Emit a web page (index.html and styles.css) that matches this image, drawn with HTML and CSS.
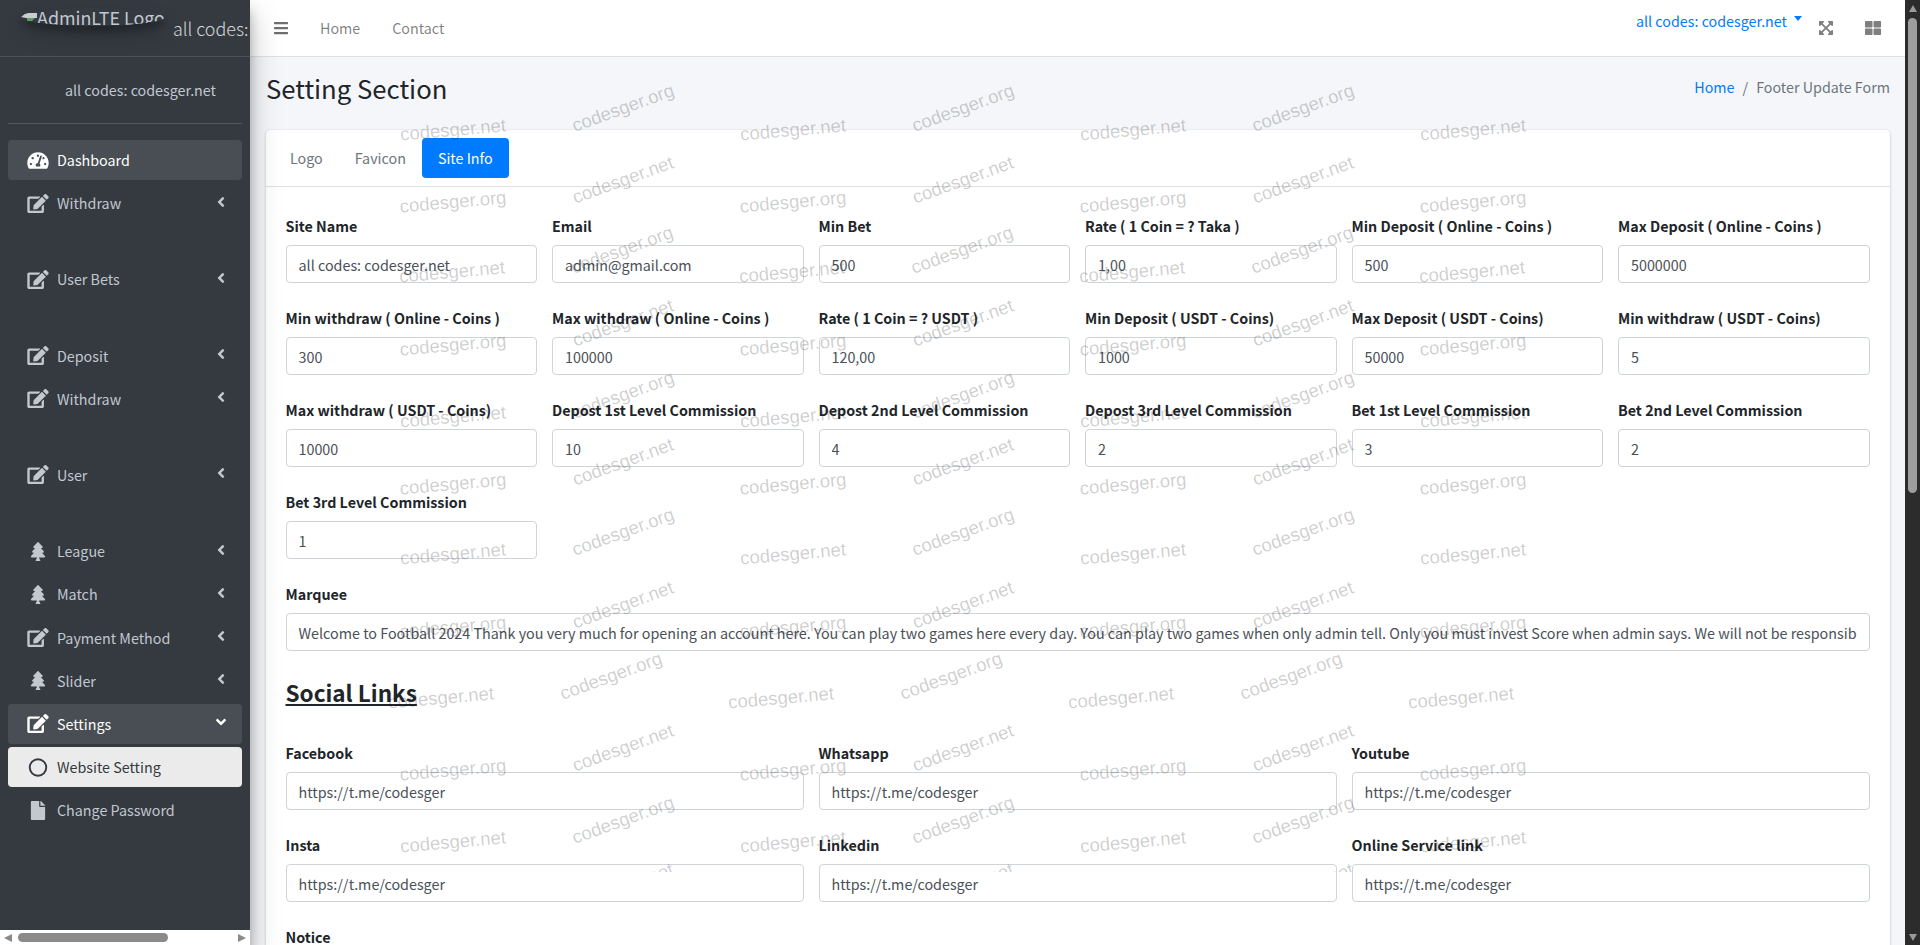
FILE: index.html
```html
<!DOCTYPE html>
<html lang="en">
<head>
<meta charset="utf-8">
<title>Setting Section</title>
<link rel="stylesheet" href="styles.css">
</head>
<body>
<svg class="defs" aria-hidden="true">
  <symbol id="i-edit" viewBox="0 0 576 512"><path d="M402.6 83.2l90.2 90.2c3.8 3.8 3.8 10 0 13.8L274.4 405.6l-92.8 10.3c-12.4 1.4-22.9-9.1-21.5-21.5l10.3-92.8L388.8 83.2c3.8-3.8 10-3.8 13.8 0zm162-22.9l-48.8-48.8c-15.2-15.2-39.9-15.2-55.2 0l-35.4 35.4c-3.8 3.8-3.8 10 0 13.8l90.2 90.2c3.8 3.8 10 3.8 13.8 0l35.4-35.4c15.2-15.3 15.2-40 0-55.2zM384 346.2V448H64V128h229.8c3.2 0 6.2-1.3 8.5-3.5l40-40c7.6-7.6 2.2-20.5-8.5-20.5H48C21.5 64 0 85.5 0 112v352c0 26.5 21.5 48 48 48h352c26.5 0 48-21.5 48-48V306.2c0-10.7-12.9-16-20.5-8.5l-40 40c-2.2 2.3-3.5 5.3-3.5 8.5z"/></symbol>
  <symbol id="i-gauge" viewBox="0 0 576 512"><path d="M288 32C128.94 32 0 160.94 0 320c0 52.8 14.25 102.26 39.06 144.8 5.61 9.62 16.3 15.2 27.44 15.2h443c11.14 0 21.83-5.58 27.44-15.2C561.75 422.26 576 372.8 576 320c0-159.06-128.94-288-288-288zm0 64c14.71 0 26.58 10.13 30.32 23.65-1.11 2.26-2.64 4.23-3.45 6.67l-9.22 27.67c-5.13 3.49-10.97 6.01-17.64 6.01-17.67 0-32-14.33-32-32S270.33 96 288 96zM96 384c-17.67 0-32-14.33-32-32s14.33-32 32-32 32 14.33 32 32-14.33 32-32 32zm48-160c-17.67 0-32-14.33-32-32s14.33-32 32-32 32 14.33 32 32-14.33 32-32 32zm246.77-72.41l-61.33 184C343.13 347.33 352 364.54 352 384c0 11.72-3.38 22.55-8.88 32H232.88c-5.5-9.45-8.88-20.28-8.88-32 0-33.94 26.5-61.43 59.9-63.59l61.34-184.01c4.17-12.56 17.73-19.45 30.36-15.17 12.57 4.19 19.35 17.79 15.17 30.36zm14.66 57.2l15.52-46.55c3.47-1.29 7.13-2.23 11.05-2.23 17.67 0 32 14.33 32 32s-14.33 32-32 32c-11.38-.01-20.89-6.28-26.57-15.22zM480 384c-17.67 0-32-14.33-32-32s14.33-32 32-32 32 14.33 32 32-14.33 32-32 32z"/></symbol>
  <symbol id="i-tree" viewBox="0 0 384 512"><path d="M378.31 378.49L298.42 288h30.63c9.01 0 16.98-5 20.78-13.06 3.8-8.04 2.55-17.26-3.28-24.05L268.42 160h28.89c9.1 0 17.3-5.35 20.86-13.61 3.52-8.13 1.86-17.59-4.24-24.08L203.66 4.83c-6.03-6.45-17.28-6.45-23.32 0L70.06 122.31c-6.1 6.49-7.75 15.95-4.24 24.08C69.38 154.65 77.59 160 86.69 160h28.89l-78.14 90.91c-5.81 6.78-7.06 15.99-3.27 24.04C37.97 283 45.93 288 54.95 288h30.63L5.69 378.49c-6 6.79-7.36 16.09-3.56 24.26 3.75 8.05 12 13.25 21 13.25H160v24.45l-30.29 48.4c-5.32 10.64 2.42 23.16 14.31 23.16h95.96c11.89 0 19.63-12.52 14.31-23.16L224 440.45V416h136.87c9 0 17.25-5.2 21-13.25 3.8-8.17 2.44-17.47-3.56-24.26z"/></symbol>
  <symbol id="i-file" viewBox="0 0 384 512"><path d="M224 136V0H24C10.7 0 0 10.7 0 24v464c0 13.3 10.7 24 24 24h336c13.3 0 24-10.7 24-24V160H248c-13.2 0-24-10.8-24-24zm160-14.1v6.1H256V0h6.1c6.4 0 12.5 2.5 17 7l97.9 98c4.5 4.5 7 10.6 7 16.9z"/></symbol>
  <symbol id="i-left" viewBox="0 0 256 512"><path d="M31.7 239l136-136c9.4-9.4 24.6-9.4 33.9 0l22.6 22.6c9.4 9.4 9.4 24.6 0 33.9L127.9 256l96.4 96.4c9.4 9.4 9.4 24.6 0 33.9L201.7 409c-9.4 9.4-24.6 9.4-33.9 0l-136-136c-9.5-9.4-9.5-24.6-.1-34z"/></symbol>
  <symbol id="i-bars" viewBox="0 0 448 512"><path d="M16 132h416c8.837 0 16-7.163 16-16V76c0-8.837-7.163-16-16-16H16C7.163 60 0 67.163 0 76v40c0 8.837 7.163 16 16 16zm0 160h416c8.837 0 16-7.163 16-16v-40c0-8.837-7.163-16-16-16H16c-8.837 0-16 7.163-16 16v40c0 8.837 7.163 16 16 16zm0 160h416c8.837 0 16-7.163 16-16v-40c0-8.837-7.163-16-16-16H16c-8.837 0-16 7.163-16 16v40c0 8.837 7.163 16 16 16z"/></symbol>
  <symbol id="i-expand" viewBox="0 0 448 512"><path d="M448 344v112a23.94 23.94 0 0 1-24 24H312c-21.39 0-32.09-25.9-17-41l36.2-36.2L224 295.6 116.77 402.9 153 439c15.09 15.1 4.39 41-17 41H24a23.94 23.94 0 0 1-24-24V344c0-21.4 25.89-32.1 41-17l36.19 36.2L184.46 256 77.18 148.7 41 185c-15.1 15.1-41 4.4-41-17V56a23.94 23.94 0 0 1 24-24h112c21.39 0 32.09 25.9 17 41l-36.2 36.2L224 216.4l107.23-107.3L295 73c-15.09-15.1-4.39-41 17-41h112a23.94 23.94 0 0 1 24 24v112c0 21.4-25.89 32.1-41 17l-36.19-36.2L263.54 256l107.28 107.3L407 327.1c15.1-15.2 41-4.5 41 16.9z"/></symbol>
  <symbol id="i-grid" viewBox="0 0 512 512"><path d="M296 32h192c13.255 0 24 10.745 24 24v160c0 13.255-10.745 24-24 24H296c-13.255 0-24-10.745-24-24V56c0-13.255 10.745-24 24-24zm-80 0H24C10.745 32 0 42.745 0 56v160c0 13.255 10.745 24 24 24h192c13.255 0 24-10.745 24-24V56c0-13.255-10.745-24-24-24zM0 296v160c0 13.255 10.745 24 24 24h192c13.255 0 24-10.745 24-24V296c0-13.255-10.745-24-24-24H24c-13.255 0-24 10.745-24 24zm296 184h192c13.255 0 24-10.745 24-24V296c0-13.255-10.745-24-24-24H296c-13.255 0-24 10.745-24 24v160c0 13.255 10.745 24 24 24z"/></symbol>
</svg>

<div class="app">
  <aside class="side-col">
    <div class="sidebar">
      <div class="brand">
        <div class="logo">
          <svg class="logo-broken" viewBox="0 0 16 16"><path class="lb-a" d="M0 8 5 4h11v5H5z"/><path class="lb-b" d="M6 9h8l-3 3H6z"/></svg>
          <span class="logo-alt">AdminLTE Logo</span>
        </div>
        <span class="brand-text">all codes: codesger.net</span>
      </div>
      <div class="user-panel">all codes: codesger.net</div>
      <ul class="nav">
        <li class="nav-item is-active"><svg class="nav-icon"><use href="#i-gauge"/></svg><span class="nav-label">Dashboard</span></li>
        <li class="nav-item"><svg class="nav-icon"><use href="#i-edit"/></svg><span class="nav-label">Withdraw</span><svg class="nav-chev"><use href="#i-left"/></svg></li>
        <li class="nav-spacer"></li>
        <li class="nav-item"><svg class="nav-icon"><use href="#i-edit"/></svg><span class="nav-label">User Bets</span><svg class="nav-chev"><use href="#i-left"/></svg></li>
        <li class="nav-spacer"></li>
        <li class="nav-item"><svg class="nav-icon"><use href="#i-edit"/></svg><span class="nav-label">Deposit</span><svg class="nav-chev"><use href="#i-left"/></svg></li>
        <li class="nav-item"><svg class="nav-icon"><use href="#i-edit"/></svg><span class="nav-label">Withdraw</span><svg class="nav-chev"><use href="#i-left"/></svg></li>
        <li class="nav-spacer"></li>
        <li class="nav-item"><svg class="nav-icon"><use href="#i-edit"/></svg><span class="nav-label">User</span><svg class="nav-chev"><use href="#i-left"/></svg></li>
        <li class="nav-spacer"></li>
        <li class="nav-item"><svg class="nav-icon"><use href="#i-tree"/></svg><span class="nav-label">League</span><svg class="nav-chev"><use href="#i-left"/></svg></li>
        <li class="nav-item"><svg class="nav-icon"><use href="#i-tree"/></svg><span class="nav-label">Match</span><svg class="nav-chev"><use href="#i-left"/></svg></li>
        <li class="nav-item"><svg class="nav-icon"><use href="#i-edit"/></svg><span class="nav-label">Payment Method</span><svg class="nav-chev"><use href="#i-left"/></svg></li>
        <li class="nav-item"><svg class="nav-icon"><use href="#i-tree"/></svg><span class="nav-label">Slider</span><svg class="nav-chev"><use href="#i-left"/></svg></li>
        <li class="nav-item is-active"><svg class="nav-icon"><use href="#i-edit"/></svg><span class="nav-label">Settings</span><svg class="nav-chev is-open"><use href="#i-left"/></svg></li>
        <li class="nav-item is-current"><svg class="nav-icon" viewBox="0 0 24 24"><circle class="ring" cx="12" cy="12" r="10.4"/></svg><span class="nav-label">Website Setting</span></li>
        <li class="nav-item"><svg class="nav-icon"><use href="#i-file"/></svg><span class="nav-label">Change Password</span></li>
      </ul>
    </div>
    <div class="hscroll">
      <span class="arr arr-left"></span>
      <div class="hscroll-track"><span class="hscroll-thumb"></span></div>
      <span class="arr arr-right"></span>
    </div>
  </aside>

  <main class="main">
    <nav class="navbar">
      <svg class="nb-bars"><use href="#i-bars"/></svg>
      <a class="nb-link">Home</a>
      <a class="nb-link">Contact</a>
      <div class="nb-right">
        <a class="nb-user">all codes: codesger.net<span class="caret"></span></a>
        <svg class="nb-expand"><use href="#i-expand"/></svg>
        <svg class="nb-grid"><use href="#i-grid"/></svg>
      </div>
    </nav>

    <div class="content">
      <header class="content-head">
        <h1 class="page-title">Setting Section</h1>
        <ol class="crumbs">
          <li class="crumb-link">Home</li>
          <li class="crumb-sep">/</li>
          <li>Footer Update Form</li>
        </ol>
      </header>

      <section class="card">
        <div class="card-head">
          <a class="pill">Logo</a>
          <a class="pill">Favicon</a>
          <a class="pill is-on">Site Info</a>
        </div>
        <div class="card-body">
          <div class="grid-6">
            <div class="field"><label class="field-label">Site Name</label><input class="field-input" value="all codes: codesger.net"></div>
            <div class="field"><label class="field-label">Email</label><input class="field-input" value="admin@gmail.com"></div>
            <div class="field"><label class="field-label">Min Bet</label><input class="field-input" value="500"></div>
            <div class="field"><label class="field-label">Rate ( 1 Coin = ? Taka )</label><input class="field-input" value="1,00"></div>
            <div class="field"><label class="field-label">Min Deposit ( Online - Coins )</label><input class="field-input" value="500"></div>
            <div class="field"><label class="field-label">Max Deposit ( Online - Coins )</label><input class="field-input" value="5000000"></div>
            <div class="field"><label class="field-label">Min withdraw ( Online - Coins )</label><input class="field-input" value="300"></div>
            <div class="field"><label class="field-label">Max withdraw ( Online - Coins )</label><input class="field-input" value="100000"></div>
            <div class="field"><label class="field-label">Rate ( 1 Coin = ? USDT )</label><input class="field-input" value="120,00"></div>
            <div class="field"><label class="field-label">Min Deposit ( USDT - Coins)</label><input class="field-input" value="1000"></div>
            <div class="field"><label class="field-label">Max Deposit ( USDT - Coins)</label><input class="field-input" value="50000"></div>
            <div class="field"><label class="field-label">Min withdraw ( USDT - Coins)</label><input class="field-input" value="5"></div>
            <div class="field"><label class="field-label">Max withdraw ( USDT - Coins)</label><input class="field-input" value="10000"></div>
            <div class="field"><label class="field-label">Depost 1st Level Commission</label><input class="field-input" value="10"></div>
            <div class="field"><label class="field-label">Depost 2nd Level Commission</label><input class="field-input" value="4"></div>
            <div class="field"><label class="field-label">Depost 3rd Level Commission</label><input class="field-input" value="2"></div>
            <div class="field"><label class="field-label">Bet 1st Level Commission</label><input class="field-input" value="3"></div>
            <div class="field"><label class="field-label">Bet 2nd Level Commission</label><input class="field-input" value="2"></div>
            <div class="field"><label class="field-label">Bet 3rd Level Commission</label><input class="field-input" value="1"></div>
          </div>
          <div class="field"><label class="field-label">Marquee</label><input class="field-input" value="Welcome to Football 2024 Thank you very much for opening an account here. You can play two games here every day. You can play two games when only admin tell. Only you must invest Score when admin says. We will not be responsible for any loss if you invest without admin instructions."></div>
          <h3 class="section-title">Social Links</h3>
          <div class="grid-3">
            <div class="field"><label class="field-label">Facebook</label><input class="field-input" value="https://t.me/codesger"></div>
            <div class="field"><label class="field-label">Whatsapp</label><input class="field-input" value="https://t.me/codesger"></div>
            <div class="field"><label class="field-label">Youtube</label><input class="field-input" value="https://t.me/codesger"></div>
            <div class="field"><label class="field-label">Insta</label><input class="field-input" value="https://t.me/codesger"></div>
            <div class="field"><label class="field-label">Linkedin</label><input class="field-input" value="https://t.me/codesger"></div>
            <div class="field"><label class="field-label">Online Service link</label><input class="field-input" value="https://t.me/codesger"></div>
          </div>
          <div class="field"><label class="field-label">Notice</label></div>
        </div>
      </section>
    </div>
  </main>

  <div class="vscroll">
    <span class="arr arr-up"></span>
    <span class="vscroll-thumb"></span>
    <span class="vscroll-fill"></span>
    <span class="arr arr-down"></span>
  </div>

  <div class="wm" aria-hidden="true">
    <div class="wm-row"><span class="wm-flat">codesger.net</span><span class="wm-tilt">codesger.org</span><span class="wm-flat">codesger.net</span><span class="wm-tilt">codesger.org</span><span class="wm-flat">codesger.net</span><span class="wm-tilt">codesger.org</span><span class="wm-flat">codesger.net</span></div>
    <div class="wm-row"><span class="wm-flat">codesger.org</span><span class="wm-tilt">codesger.net</span><span class="wm-flat">codesger.org</span><span class="wm-tilt">codesger.net</span><span class="wm-flat">codesger.org</span><span class="wm-tilt">codesger.net</span><span class="wm-flat">codesger.org</span></div>
    <div class="wm-row"><span class="wm-flat">codesger.net</span><span class="wm-tilt">codesger.org</span><span class="wm-flat">codesger.net</span><span class="wm-tilt">codesger.org</span><span class="wm-flat">codesger.net</span><span class="wm-tilt">codesger.org</span><span class="wm-flat">codesger.net</span></div>
    <div class="wm-row"><span class="wm-flat">codesger.org</span><span class="wm-tilt">codesger.net</span><span class="wm-flat">codesger.org</span><span class="wm-tilt">codesger.net</span><span class="wm-flat">codesger.org</span><span class="wm-tilt">codesger.net</span><span class="wm-flat">codesger.org</span></div>
    <div class="wm-row"><span class="wm-flat">codesger.net</span><span class="wm-tilt">codesger.org</span><span class="wm-flat">codesger.net</span><span class="wm-tilt">codesger.org</span><span class="wm-flat">codesger.net</span><span class="wm-tilt">codesger.org</span><span class="wm-flat">codesger.net</span></div>
    <div class="wm-row"><span class="wm-flat">codesger.org</span><span class="wm-tilt">codesger.net</span><span class="wm-flat">codesger.org</span><span class="wm-tilt">codesger.net</span><span class="wm-flat">codesger.org</span><span class="wm-tilt">codesger.net</span><span class="wm-flat">codesger.org</span></div>
    <div class="wm-row"><span class="wm-flat">codesger.net</span><span class="wm-tilt">codesger.org</span><span class="wm-flat">codesger.net</span><span class="wm-tilt">codesger.org</span><span class="wm-flat">codesger.net</span><span class="wm-tilt">codesger.org</span><span class="wm-flat">codesger.net</span></div>
    <div class="wm-row"><span class="wm-flat">codesger.org</span><span class="wm-tilt">codesger.net</span><span class="wm-flat">codesger.org</span><span class="wm-tilt">codesger.net</span><span class="wm-flat">codesger.org</span><span class="wm-tilt">codesger.net</span><span class="wm-flat">codesger.org</span></div>
    <div class="wm-row"><span class="wm-flat">codesger.net</span><span class="wm-tilt">codesger.org</span><span class="wm-flat">codesger.net</span><span class="wm-tilt">codesger.org</span><span class="wm-flat">codesger.net</span><span class="wm-tilt">codesger.org</span><span class="wm-flat">codesger.net</span></div>
    <div class="wm-row"><span class="wm-flat">codesger.org</span><span class="wm-tilt">codesger.net</span><span class="wm-flat">codesger.org</span><span class="wm-tilt">codesger.net</span><span class="wm-flat">codesger.org</span><span class="wm-tilt">codesger.net</span><span class="wm-flat">codesger.org</span></div>
    <div class="wm-row"><span class="wm-flat">codesger.net</span><span class="wm-tilt">codesger.org</span><span class="wm-flat">codesger.net</span><span class="wm-tilt">codesger.org</span><span class="wm-flat">codesger.net</span><span class="wm-tilt">codesger.org</span><span class="wm-flat">codesger.net</span></div>
    <div class="wm-row"><span class="wm-flat">codesger.org</span><span class="wm-tilt">codesger.net</span><span class="wm-flat">codesger.org</span><span class="wm-tilt">codesger.net</span><span class="wm-flat">codesger.org</span><span class="wm-tilt">codesger.net</span><span class="wm-flat">codesger.org</span></div>
  </div>
</div>
</body>
</html>
```

FILE: styles.css
```css
* { box-sizing: border-box; }

html, body {
  margin: 0;
  height: 100%;
  overflow: hidden;
}

body {
  font-family: "Noto Sans CJK SC", "Noto Sans", sans-serif;
  font-size: 14.3px;
  line-height: 24px;
  color: #212529;
  background: #f4f6f9;
}

.defs { display: none; }

.app {
  position: relative;
  display: flex;
  width: 1920px;
  height: 945px;
  overflow: hidden;
}

/* sidebar */
.side-col {
  position: relative;
  z-index: 2;
  flex: 0 0 250px;
  width: 250px;
  min-width: 0;
  display: flex;
  flex-direction: column;
  box-shadow: 0 14px 28px rgba(0,0,0,.25), 0 10px 10px rgba(0,0,0,.22);
}

.sidebar {
  flex: 1;
  min-height: 0;
  width: 250px;
  overflow: hidden;
  background: #343a40;
}

.brand {
  display: flex;
  width: 250px;
  height: 57px;
  border-bottom: 1px solid #4b545c;
  overflow: hidden;
  white-space: nowrap;
}

.logo {
  flex: 0 0 144px;
  height: 18px;
  margin: 8px 8px 0 21px;
  display: flex;
  align-items: center;
  overflow: hidden;
  border-radius: 50%;
  color: #c2c7d0;
  font-size: 17.9px;
  line-height: 18px;
  box-shadow: 0 10px 20px rgba(0,0,0,.19), 0 6px 6px rgba(0,0,0,.23);
}

.logo-broken {
  flex: 0 0 16px;
  width: 16px;
  height: 16px;
}

.lb-a { fill: #c9cdd2; }
.lb-b { fill: #5f9e5f; }

.logo-alt { white-space: nowrap; }

.brand-text {
  margin-top: 16px;
  font-size: 17.9px;
  font-weight: 300;
  color: rgba(255,255,255,.8);
}

.user-panel {
  margin: 0 8px 16px;
  padding: 21px 0 21px 57px;
  height: 67px;
  border-bottom: 1px solid #4f5962;
  color: #c2c7d0;
  white-space: nowrap;
}

.nav {
  list-style: none;
  margin: 0;
  padding: 0 8px;
}

.nav-item {
  display: flex;
  align-items: center;
  height: 40px;
  margin-bottom: 3.2px;
  padding: 0 16px 0 19px;
  border-radius: 4px;
  color: #c2c7d0;
  white-space: nowrap;
}

.nav-spacer { height: 33px; }

.nav-item.is-active {
  background: rgba(255,255,255,.1);
  color: #fff;
}

.nav-item.is-current {
  background: rgba(255,255,255,.9);
  color: #343a40;
}

.nav-icon {
  flex: 0 0 22px;
  width: 22px;
  height: 19px;
  margin-right: 8px;
  fill: currentColor;
}

.ring {
  fill: none;
  stroke: currentColor;
  stroke-width: 2.4;
}

.nav-label { flex: 1; }

.nav-chev {
  flex: 0 0 10px;
  width: 10px;
  height: 16px;
  margin-top: -3px;
  fill: currentColor;
}

.nav-chev.is-open { transform: rotate(-90deg); }

/* fake scrollbars */
.hscroll {
  flex: 0 0 15px;
  display: flex;
  align-items: center;
  padding: 0 4px;
  background: #fff;
}

.hscroll-track {
  flex: 1;
  padding: 0 6px;
}

.hscroll-thumb {
  display: block;
  width: 150px;
  height: 9px;
  border-radius: 5px;
  background: #8a8a8a;
}

.arr {
  display: block;
  width: 0;
  height: 0;
  border-style: solid;
  border-color: transparent;
}

.arr-left { border-width: 4.5px 8px 4.5px 0; border-right-color: #8a8a8a; }
.arr-right { border-width: 4.5px 0 4.5px 8px; border-left-color: #8a8a8a; }
.arr-up { border-width: 0 4.5px 7px; border-bottom-color: #9a9a9a; }
.arr-down { border-width: 7px 4.5px 0; border-top-color: #9a9a9a; }

.vscroll {
  flex: 0 0 15px;
  display: flex;
  flex-direction: column;
  align-items: center;
  padding: 5px 0 4px;
  background: #2c2c2c;
}

.vscroll-thumb {
  display: block;
  width: 9px;
  height: 475px;
  margin-top: 6px;
  border-radius: 5px;
  background: #9e9e9e;
}

.vscroll-fill { flex: 1; }

/* main */
.main {
  flex: 1;
  min-width: 0;
  display: flex;
  flex-direction: column;
  overflow: hidden;
}

.navbar {
  flex: 0 0 57px;
  display: flex;
  align-items: center;
  background: #fff;
  border-bottom: 1px solid #dee2e6;
  color: rgba(0,0,0,.5);
}

.nb-bars {
  width: 14px;
  height: 16px;
  margin: 0 32px 0 24px;
  fill: #6f6f6f;
}

.nb-link { margin-right: 32px; }

.nb-right {
  margin-left: auto;
  display: flex;
  align-items: center;
  height: 100%;
}

.nb-user {
  align-self: flex-start;
  margin-top: 9px;
  margin-right: 17px;
  color: #007bff;
  display: flex;
  align-items: center;
}

.caret {
  width: 0;
  height: 0;
  margin: -5px 0 0 7px;
  border-style: solid;
  border-width: 5px 4.5px 0;
  border-color: #007bff transparent transparent;
}

.nb-expand {
  width: 14px;
  height: 16px;
  margin-right: 32px;
  fill: #7f7f7f;
}

.nb-grid {
  width: 16px;
  height: 16px;
  margin-right: 24px;
  fill: #7f7f7f;
}

.content {
  flex: 1;
  min-height: 0;
  padding: 0 15px 0 16px;
  background: #f4f6f9;
}

.content-head {
  display: flex;
  justify-content: space-between;
  align-items: flex-start;
  height: 73px;
  padding-top: 13px;
}

.page-title {
  margin: 0;
  font-size: 25.7px;
  line-height: 35px;
  font-weight: 400;
}

.crumbs {
  display: flex;
  list-style: none;
  margin: 5px 0 0;
  padding: 0;
  color: #6c757d;
}

.crumb-link { color: #007bff; }
.crumb-sep { margin: 0 8px; }

.card {
  background: #fff;
  border-radius: 4px;
  box-shadow: 0 0 1px rgba(0,0,0,.125), 0 1px 3px rgba(0,0,0,.2);
}

.card-head {
  display: flex;
  height: 57px;
  padding: 8px;
  border-bottom: 1px solid rgba(0,0,0,.125);
}

.pill {
  height: 40px;
  padding: 8px 16px;
  border-radius: 4px;
  color: #6c757d;
}

.pill.is-on {
  background: #007bff;
  color: #fff;
}

.card-body { padding: 20px 20.5px 20px 19.5px; }

.grid-6 {
  display: grid;
  grid-template-columns: repeat(6, minmax(0, 1fr));
  column-gap: 15px;
}

.grid-3 {
  display: grid;
  grid-template-columns: repeat(3, minmax(0, 1fr));
  column-gap: 15px;
}

.field { height: 92px; padding-top: 7px; }

.field-label {
  display: block;
  height: 24px;
  margin-bottom: 7px;
  font-weight: 700;
  white-space: nowrap;
}

.field-input {
  display: block;
  width: 100%;
  height: 38px;
  padding: 6px 12px;
  border: 1px solid #ced4da;
  border-radius: 4px;
  background: transparent;
  color: #495057;
  font: inherit;
  font-size: 14.34px;
  outline: 0;
}

.section-title {
  margin: 0;
  height: 67px;
  padding-top: 10px;
  font-size: 22.5px;
  line-height: 30px;
  font-weight: 700;
  text-decoration: underline;
}

/* watermark canvas */
.wm {
  position: absolute;
  z-index: 3;
  left: 367px;
  top: 0;
  width: 1190px;
  height: 872px;
  padding-top: 94px;
  overflow: hidden;
  pointer-events: none;
  font-family: "Liberation Sans", Arial, sans-serif;
  font-size: 18.5px;
  line-height: 20px;
  color: rgba(0,0,0,.2);
}

.wm-row {
  display: flex;
  align-items: center;
  height: 72px;
  margin-left: 1px;
}

.wm-row:nth-child(3) { height: 68px; margin-left: 0; }
.wm-row:nth-child(4) { height: 78px; }
.wm-row:nth-child(5) { height: 66px; }
.wm-row:nth-child(6) { height: 68px; }
.wm-row:nth-child(8) { height: 74px; }
.wm-row:nth-child(9) { height: 68px; margin-left: -11px; }
.wm-row:nth-child(10) { height: 76px; }
.wm-row:nth-child(11) { height: 68px; }
.wm-row:nth-child(12) { height: 66px; }

.wm-row > span {
  flex: 0 0 170px;
  text-align: center;
  white-space: nowrap;
}

.wm-flat { transform: rotate(-5deg); }
.wm-tilt { transform: translateY(-22px) rotate(-20deg); }
```
